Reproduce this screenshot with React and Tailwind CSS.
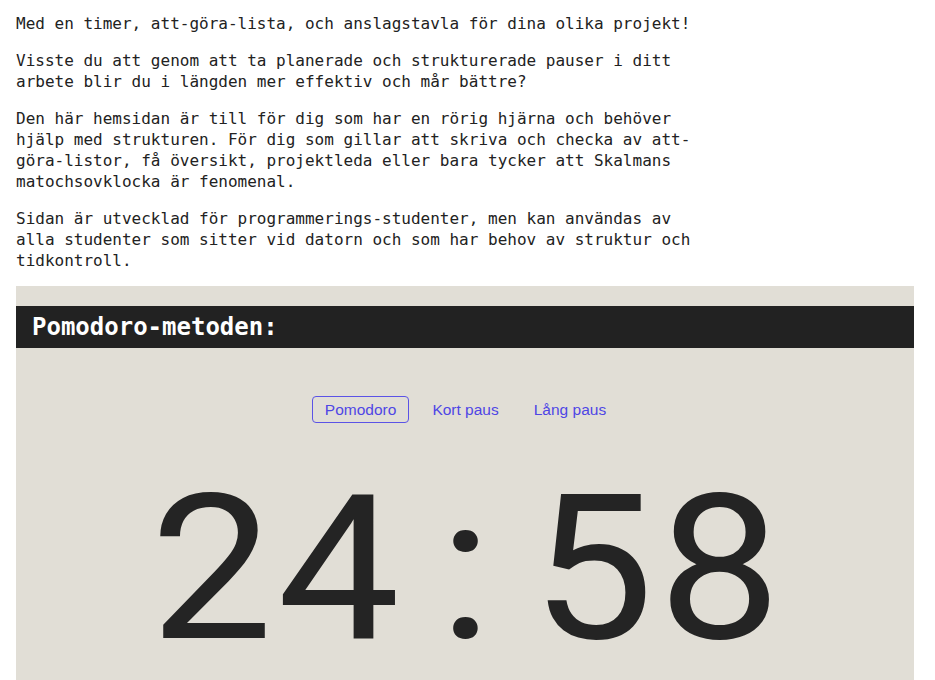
import React from "react";

const digits = ["2", "4", ":", "5", "8"];

export default function App() {
  return (
    <div className="min-h-screen bg-white text-[#222222]">
      <div className="px-4 pt-[13px]">
        <div
          className="w-[682px] text-[16px] leading-[21px]"
          style={{ fontFamily: '"DejaVu Sans Mono", "Liberation Mono", monospace' }}
        >
          <p className="mb-4">
            Med en timer, att-göra-lista, och anslagstavla för dina olika projekt!
          </p>
          <p className="mb-4">
            Visste du att genom att ta planerade och strukturerade pauser i ditt arbete blir du i
            längden mer effektiv och mår bättre?
          </p>
          <p className="mb-4">
            Den här hemsidan är till för dig som har en rörig hjärna och behöver hjälp med
            strukturen. För dig som gillar att skriva och checka av att-göra-listor, få översikt,
            projektleda eller bara tycker att Skalmans matochsovklocka är fenomenal.
          </p>
          <p className="mb-[15px]">
            Sidan är utvecklad för programmerings-studenter, men kan användas av alla studenter
            som sitter vid datorn och som har behov av struktur och tidkontroll.
          </p>
        </div>

        <section className="w-[898px] bg-[#e1ded6] pt-5 pb-10">
          <div className="h-[42px] bg-[#222222] flex items-center px-4">
            <h2
              className="text-white text-[24px] font-bold leading-none"
              style={{ fontFamily: '"DejaVu Sans Mono", "Liberation Mono", monospace' }}
            >
              Pomodoro-metoden:
            </h2>
          </div>

          <div
            className="mt-12 flex justify-center items-center gap-[11px] text-[15.5px] leading-[17px] text-[#4f46e5]"
            style={{ fontFamily: '"Liberation Sans", Arial, sans-serif' }}
          >
            <button className="px-3 py-[4px] rounded-[4px] border border-[#5b53e6]">Pomodoro</button>
            <button className="px-3 py-[5px] rounded-[4px]">Kort paus</button>
            <button className="px-3 py-[5px] rounded-[4px]">Lång paus</button>
          </div>

          <div
            className="mt-[45px] flex justify-center text-[202px] leading-none text-[#242424]"
            style={{ fontFamily: 'Roboto, "Noto Sans", sans-serif' }}
          >
            {digits.map((d, i) => (
              <span key={i} className="inline-block w-[127px] text-center scale-x-[1.08]">
                {d}
              </span>
            ))}
          </div>
        </section>
      </div>
    </div>
  );
}
